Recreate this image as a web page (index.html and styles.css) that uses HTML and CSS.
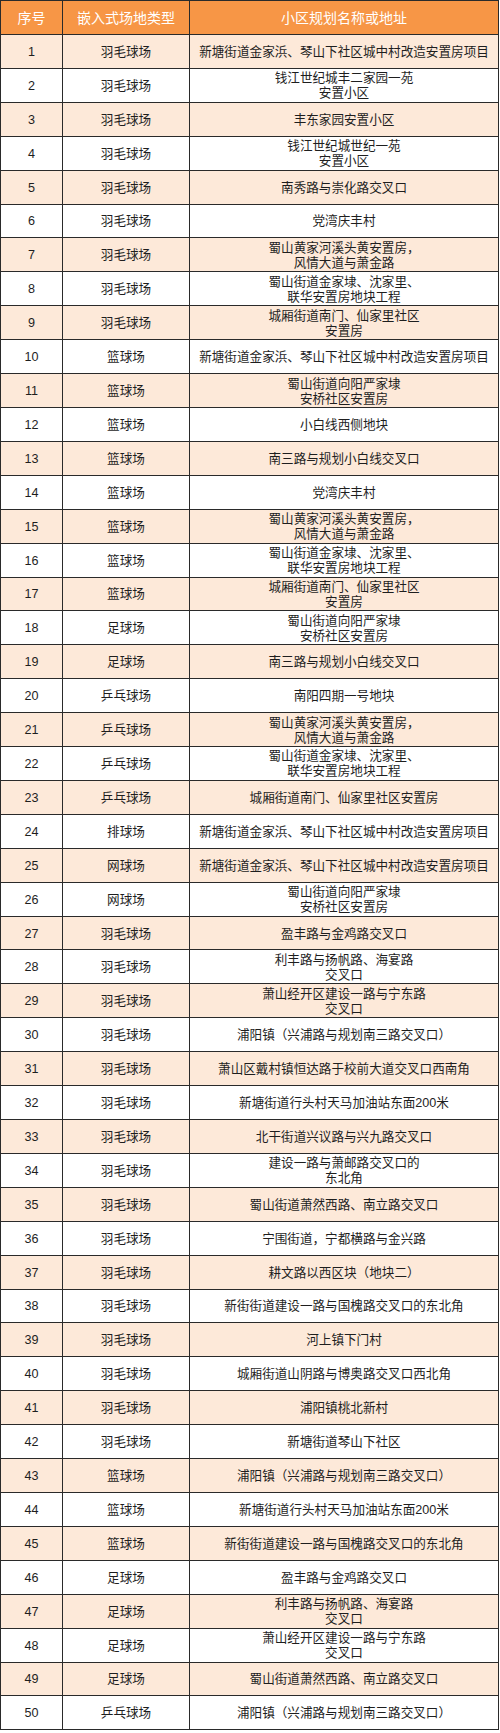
FILE: index.html
```html
<!DOCTYPE html>
<html lang="zh-CN">
<head>
<meta charset="utf-8">
<title>嵌入式场地</title>
<link rel="stylesheet" href="styles.css">
</head>
<body>
<table class="sheet">
<colgroup><col class="c-no"><col class="c-type"><col class="c-addr"></colgroup>
<thead>
<tr><th>序号</th><th>嵌入式场地类型</th><th>小区规划名称或地址</th></tr>
</thead>
<tbody>
<tr><td>1</td><td>羽毛球场</td><td>新塘街道金家浜、琴山下社区城中村改造安置房项目</td></tr>
<tr><td>2</td><td>羽毛球场</td><td>钱江世纪城丰二家园一苑<br>安置小区</td></tr>
<tr><td>3</td><td>羽毛球场</td><td>丰东家园安置小区</td></tr>
<tr><td>4</td><td>羽毛球场</td><td>钱江世纪城世纪一苑<br>安置小区</td></tr>
<tr><td>5</td><td>羽毛球场</td><td>南秀路与崇化路交叉口</td></tr>
<tr><td>6</td><td>羽毛球场</td><td>党湾庆丰村</td></tr>
<tr><td>7</td><td>羽毛球场</td><td>蜀山黄家河溪头黄安置房，<br>风情大道与萧金路</td></tr>
<tr><td>8</td><td>羽毛球场</td><td>蜀山街道金家埭、沈家里、<br>联华安置房地块工程</td></tr>
<tr><td>9</td><td>羽毛球场</td><td>城厢街道南门、仙家里社区<br>安置房</td></tr>
<tr><td>10</td><td>篮球场</td><td>新塘街道金家浜、琴山下社区城中村改造安置房项目</td></tr>
<tr><td>11</td><td>篮球场</td><td>蜀山街道向阳严家埭<br>安桥社区安置房</td></tr>
<tr><td>12</td><td>篮球场</td><td>小白线西侧地块</td></tr>
<tr><td>13</td><td>篮球场</td><td>南三路与规划小白线交叉口</td></tr>
<tr><td>14</td><td>篮球场</td><td>党湾庆丰村</td></tr>
<tr><td>15</td><td>篮球场</td><td>蜀山黄家河溪头黄安置房，<br>风情大道与萧金路</td></tr>
<tr><td>16</td><td>篮球场</td><td>蜀山街道金家埭、沈家里、<br>联华安置房地块工程</td></tr>
<tr><td>17</td><td>篮球场</td><td>城厢街道南门、仙家里社区<br>安置房</td></tr>
<tr><td>18</td><td>足球场</td><td>蜀山街道向阳严家埭<br>安桥社区安置房</td></tr>
<tr><td>19</td><td>足球场</td><td>南三路与规划小白线交叉口</td></tr>
<tr><td>20</td><td>乒乓球场</td><td>南阳四期一号地块</td></tr>
<tr><td>21</td><td>乒乓球场</td><td>蜀山黄家河溪头黄安置房，<br>风情大道与萧金路</td></tr>
<tr><td>22</td><td>乒乓球场</td><td>蜀山街道金家埭、沈家里、<br>联华安置房地块工程</td></tr>
<tr><td>23</td><td>乒乓球场</td><td>城厢街道南门、仙家里社区安置房</td></tr>
<tr><td>24</td><td>排球场</td><td>新塘街道金家浜、琴山下社区城中村改造安置房项目</td></tr>
<tr><td>25</td><td>网球场</td><td>新塘街道金家浜、琴山下社区城中村改造安置房项目</td></tr>
<tr><td>26</td><td>网球场</td><td>蜀山街道向阳严家埭<br>安桥社区安置房</td></tr>
<tr><td>27</td><td>羽毛球场</td><td>盈丰路与金鸡路交叉口</td></tr>
<tr><td>28</td><td>羽毛球场</td><td>利丰路与扬帆路、海宴路<br>交叉口</td></tr>
<tr><td>29</td><td>羽毛球场</td><td>萧山经开区建设一路与宁东路<br>交叉口</td></tr>
<tr><td>30</td><td>羽毛球场</td><td>浦阳镇（兴浦路与规划南三路交叉口）</td></tr>
<tr><td>31</td><td>羽毛球场</td><td>萧山区戴村镇恒达路于校前大道交叉口西南角</td></tr>
<tr><td>32</td><td>羽毛球场</td><td>新塘街道行头村天马加油站东面200米</td></tr>
<tr><td>33</td><td>羽毛球场</td><td>北干街道兴议路与兴九路交叉口</td></tr>
<tr><td>34</td><td>羽毛球场</td><td>建设一路与萧邮路交叉口的<br>东北角</td></tr>
<tr><td>35</td><td>羽毛球场</td><td>蜀山街道萧然西路、南立路交叉口</td></tr>
<tr><td>36</td><td>羽毛球场</td><td>宁围街道，宁都横路与金兴路</td></tr>
<tr><td>37</td><td>羽毛球场</td><td>耕文路以西区块（地块二）</td></tr>
<tr><td>38</td><td>羽毛球场</td><td>新街街道建设一路与国槐路交叉口的东北角</td></tr>
<tr><td>39</td><td>羽毛球场</td><td>河上镇下门村</td></tr>
<tr><td>40</td><td>羽毛球场</td><td>城厢街道山阴路与博奥路交叉口西北角</td></tr>
<tr><td>41</td><td>羽毛球场</td><td>浦阳镇桃北新村</td></tr>
<tr><td>42</td><td>羽毛球场</td><td>新塘街道琴山下社区</td></tr>
<tr><td>43</td><td>篮球场</td><td>浦阳镇（兴浦路与规划南三路交叉口）</td></tr>
<tr><td>44</td><td>篮球场</td><td>新塘街道行头村天马加油站东面200米</td></tr>
<tr><td>45</td><td>篮球场</td><td>新街街道建设一路与国槐路交叉口的东北角</td></tr>
<tr><td>46</td><td>足球场</td><td>盈丰路与金鸡路交叉口</td></tr>
<tr><td>47</td><td>足球场</td><td>利丰路与扬帆路、海宴路<br>交叉口</td></tr>
<tr><td>48</td><td>足球场</td><td>萧山经开区建设一路与宁东路<br>交叉口</td></tr>
<tr><td>49</td><td>足球场</td><td>蜀山街道萧然西路、南立路交叉口</td></tr>
<tr><td>50</td><td>乒乓球场</td><td>浦阳镇（兴浦路与规划南三路交叉口）</td></tr>
</tbody>
</table>
</body>
</html>
```

FILE: styles.css
```css
html, body {
  margin: 0;
  padding: 0;
  background: #ffffff;
}

body {
  font-family: "Liberation Sans", "Noto Sans CJK SC", sans-serif;
  color: #1e1e1e;
}

.sheet {
  border-collapse: collapse;
  table-layout: fixed;
  width: 498px;
}

.c-no { width: 62px; }
.c-type { width: 127px; }
.c-addr { width: 309px; }

.sheet th,
.sheet td {
  border: 1px solid #2a2a2a;
  text-align: center;
  vertical-align: middle;
  padding: 2px 0 0 0;
  line-height: 15px;
  white-space: nowrap;
}

.sheet thead tr {
  height: 34px;
}

.sheet th {
  background: #f79646;
  color: #ffffff;
  font-size: 14px;
  font-weight: normal;
}

.sheet tbody tr {
  height: 33.92px;
}

.sheet td {
  font-size: 12.6px;
}

.sheet tbody tr:nth-child(odd) td {
  background: #fde9d9;
}
```
